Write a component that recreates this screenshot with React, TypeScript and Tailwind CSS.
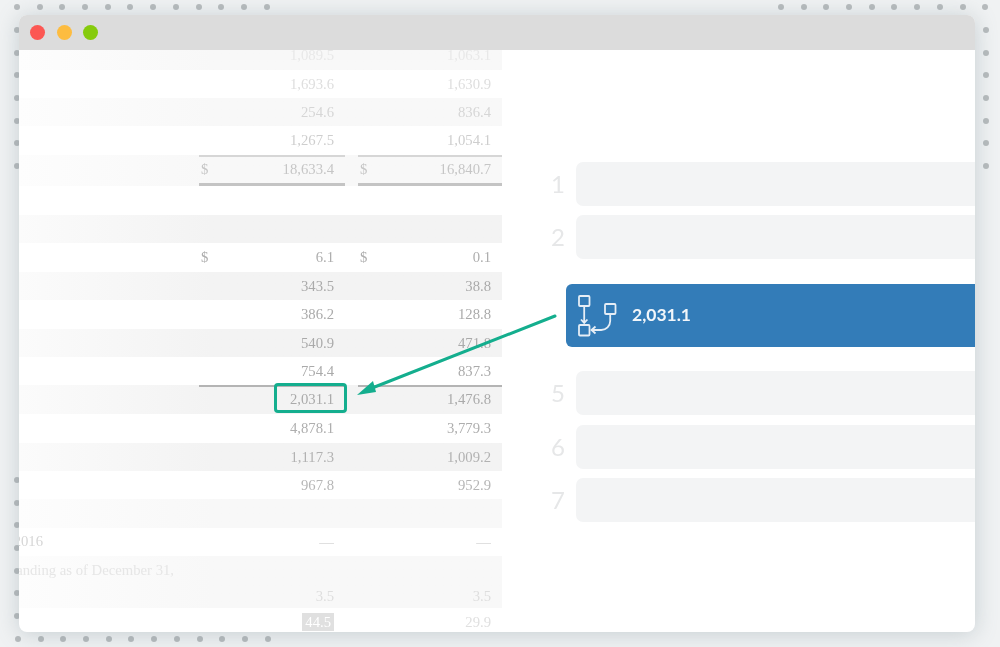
const Dots = ({ n, className }: { n: number; className: string }) => (
  <div className={className}>
    {Array.from({ length: n }).map((_, i) => (
      <span key={i} className="w-[6px] h-[6px] rounded-full bg-[#b7bbbd] shrink-0" />
    ))}
  </div>
);

type Row = {
  h: number;
  shade?: string;
  a?: string;
  b?: string;
  c?: string;
  label?: string;
  labelPad?: string;
  dollar?: boolean;
  top?: boolean;
  dbl?: boolean;
  hi?: boolean;
  dark?: boolean;
};

const rows: Row[] = [
  { h: 29, a: "1,089.5", b: "1,063.1", c: "text-[#e8e8e8]", shade: "fade" },
  { h: 28, a: "1,693.6", b: "1,630.9", c: "text-[#dedede]" },
  { h: 28, a: "254.6", b: "836.4", c: "text-[#d6d6d6]", shade: "fade" },
  { h: 29, a: "1,267.5", b: "1,054.1", c: "text-[#cecece]" },
  { h: 31, a: "18,633.4", b: "16,840.7", c: "text-[#c6c6c6]", shade: "fade", dollar: true, top: true, dbl: true },
  { h: 29 },
  { h: 28, shade: "mid" },
  { h: 29, a: "6.1", b: "0.1", c: "text-[#aeaeae]", dollar: true },
  { h: 28, a: "343.5", b: "38.8", c: "text-[#aaaaaa]", shade: "mid" },
  { h: 29, a: "386.2", b: "128.8", c: "text-[#aaaaaa]" },
  { h: 28, a: "540.9", b: "471.8", c: "text-[#aaaaaa]", shade: "mid" },
  { h: 28, a: "754.4", b: "837.3", c: "text-[#aaaaaa]" },
  { h: 29, a: "2,031.1", b: "1,476.8", c: "text-[#aaaaaa]", shade: "mid", top: true, dark: true, hi: true },
  { h: 29, a: "4,878.1", b: "3,779.3", c: "text-[#aeaeae]" },
  { h: 28, a: "1,117.3", b: "1,009.2", c: "text-[#b2b2b2]", shade: "mid" },
  { h: 28, a: "967.8", b: "952.9", c: "text-[#b6b6b6]" },
  { h: 29, shade: "fade" },
  { h: 28, label: "2016", labelPad: "pr-[156px]", a: "—", b: "—", c: "text-[#d6d6d6]" },
  { h: 29, label: "outstanding as of December 31,", labelPad: "pr-[25px]", c: "text-[#e6e6e6]", shade: "fade" },
  { h: 23, a: "3.5", b: "3.5", c: "text-[#dedede]", shade: "fade" },
  { h: 28, b: "29.9", c: "text-[#e0e0e0]" },
];

const TableRow = ({ r }: { r: Row }) => (
  <div
    style={{ height: r.h }}
    className={`relative shrink-0 grid grid-cols-[180px_146px_13px_144px] items-center text-[14.7px] leading-none ${r.c ?? ""} ${
      r.shade === "mid"
        ? "bg-gradient-to-r from-[#fbfbfb] to-[#f3f3f3] to-[40%]"
        : r.shade === "fade"
          ? "bg-gradient-to-r from-[#fdfdfd] to-[#f8f8f8] to-[40%]"
          : ""
    }`}
  >
    <div className={`h-full overflow-hidden flex items-center justify-end pb-[1px] ${r.labelPad ?? ""}`}>
      {r.label && <span className="shrink-0 whitespace-nowrap">{r.label}</span>}
    </div>
    <div
      className={`h-full flex items-center justify-between pl-[2px] pr-[11px] ${r.top ? "pb-[2px]" : "pb-0"} ${
        r.top ? (r.dark ? "border-t-2 border-[#b4b4b4]" : "border-t-2 border-[#d6d6d6]") : ""
      } ${r.dbl ? "border-b-[3px] border-b-[#c4c4c4]" : ""}`}
    >
      <span>{r.dollar ? "$" : ""}</span>
      {r.a && <span>{r.a}</span>}
      {!r.a && r.b === "29.9" && (
        <span className="bg-[#e0e0e0] text-white px-[3px] py-[2px]">44.5</span>
      )}
    </div>
    <div />
    <div
      className={`h-full flex items-center justify-between pl-[2px] pr-[11px] ${r.top ? "pb-[2px]" : "pb-0"} ${
        r.top ? (r.dark ? "border-t-2 border-[#b4b4b4]" : "border-t-2 border-[#d6d6d6]") : ""
      } ${r.dbl ? "border-b-[3px] border-b-[#c4c4c4]" : ""}`}
    >
      <span>{r.dollar ? "$" : ""}</span>
      {r.b && <span>{r.b}</span>}
    </div>
    {r.hi && (
      <div className="absolute left-[255px] top-[-2px] w-[73px] h-[30px] rounded-[4px] border-[3px] border-[#14ae8e]" />
    )}
  </div>
);

const Slot = ({ n, mt }: { n: string; mt: string }) => (
  <div className={`flex items-center h-[44px] ${mt}`}>
    <span className="w-[30px] pr-[6px] pb-[1px] text-center text-[24px] leading-none text-[#e6e7e8]">{n}</span>
    <div className="flex-1 h-full rounded-l-[7px] bg-[#f3f4f5]" />
  </div>
);

const FlowIcon = () => (
  <svg width="40" height="42" viewBox="0 0 40 42" fill="none" stroke="#e6eef6" strokeWidth="1.8" className="shrink-0">
    <rect x="1" y="1" width="10.5" height="10" rx="1" />
    <rect x="1" y="30" width="10.5" height="10.5" rx="1" />
    <rect x="27" y="9" width="10.5" height="10" rx="1" />
    <path d="M6.2 11V27.5M3 24.5l3.2 3.5 3.2-3.5" />
    <path d="M32.2 19V26a9 9 0 0 1-9 9H14M17.5 31.5l-4 3.5 4 3.5" />
  </svg>
);

export default function App() {
  return (
    <div className="relative w-[1000px] h-[647px] overflow-hidden bg-[#f0f2f3] blur-[0.5px] [font-family:'Lato',sans-serif]">
      <Dots n={12} className="absolute left-[14px] top-[4px] flex gap-[16.7px]" />
      <Dots n={10} className="absolute left-[778px] top-[4px] flex gap-[16.7px]" />
      <Dots n={7} className="absolute left-[13.5px] top-[27px] flex flex-col gap-[16.7px]" />
      <Dots n={7} className="absolute left-[982.5px] top-[27px] flex flex-col gap-[16.7px]" />
      <Dots n={7} className="absolute left-[13.5px] top-[477px] flex flex-col gap-[16.7px]" />
      <Dots n={12} className="absolute left-[15px] top-[636px] flex gap-[16.7px]" />

      <div className="absolute left-[19px] top-[15px] w-[956px] h-[617px] rounded-[8px] overflow-hidden bg-white shadow-[0_2px_22px_rgba(110,130,140,0.32)] flex flex-col">
        <div className="h-[35px] shrink-0 bg-[#dcdcdc] flex items-center gap-[11.5px] pl-[11px]">
          <span className="w-[15px] h-[15px] rounded-full bg-[#fc5753]" />
          <span className="w-[15px] h-[15px] rounded-full bg-[#fdbc40]" />
          <span className="w-[15px] h-[15px] rounded-full bg-[#86cb0c]" />
        </div>
        <div className="relative flex-1 flex overflow-hidden">
          <div className="w-[483px] shrink-0 flex flex-col -mt-[9px] [font-family:'Liberation_Serif',serif]">
            {rows.map((r, i) => (
              <TableRow key={i} r={r} />
            ))}
          </div>
          <div className="flex-1 flex flex-col pt-[112px] pl-[44px]">
            <Slot n="1" mt="" />
            <Slot n="2" mt="mt-[9px]" />
            <div className="mt-[25px] h-[63px] rounded-l-[6px] bg-[#337cb8] flex items-center gap-[14px] pl-[12px] ml-[20px]">
              <FlowIcon />
              <span className="text-[17.5px] font-bold text-[#f2f6fa]">2,031.1</span>
            </div>
            <Slot n="5" mt="mt-[24px]" />
            <Slot n="6" mt="mt-[10px]" />
            <Slot n="7" mt="mt-[9px]" />
          </div>
          <svg className="absolute left-[330px] top-[255px]" width="215" height="100" viewBox="0 0 215 100" fill="none">
            <path d="M206 11L18 85" stroke="#14ae8e" strokeWidth="3" strokeLinecap="round" />
            <path d="M8 90L24 76L27 87Z" fill="#14ae8e" />
          </svg>
        </div>
      </div>
    </div>
  );
}
